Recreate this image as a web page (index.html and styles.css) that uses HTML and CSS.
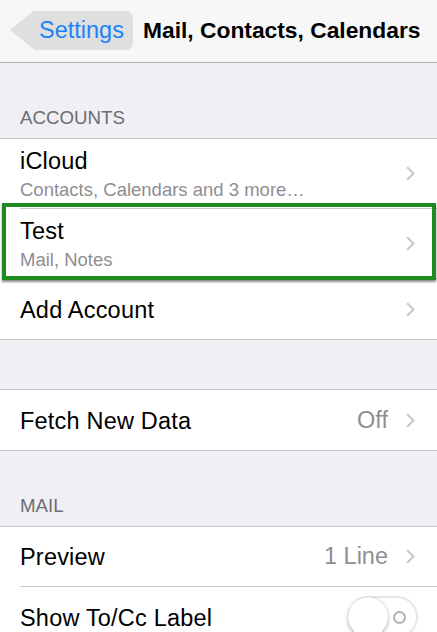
FILE: index.html
```html
<!DOCTYPE html>
<html lang="en">
<head>
  <meta charset="UTF-8" />
  <meta name="viewport" content="width=device-width, initial-scale=1.0" />
  <title>Mail, Contacts, Calendars</title>
  <link rel="stylesheet" href="styles.css">
</head>
<body>
  <div class="navbar">
    <div class="back">
      <span class="back-label">Settings</span>
    </div>
    <div class="nav-title">Mail, Contacts, Calendars</div>
  </div>

  <div class="section-header">ACCOUNTS</div>
  <div class="group">
    <div class="cell">
      <div class="cell-body tall">
        <div class="cell-text">
          <div class="title">iCloud</div>
          <div class="subtitle">Contacts, Calendars and 3 more…</div>
        </div>
        <svg class="chevron" width="9" height="15" viewBox="0 0 9 15"><polyline points="1.2,1.2 7.5,7.5 1.2,13.8" /></svg>
      </div>
    </div>
    <div class="cell highlighted">
      <div class="cell-body tall">
        <div class="cell-text">
          <div class="title">Test</div>
          <div class="subtitle">Mail, Notes</div>
        </div>
        <svg class="chevron" width="9" height="15" viewBox="0 0 9 15"><polyline points="1.2,1.2 7.5,7.5 1.2,13.8" /></svg>
      </div>
    </div>
    <div class="cell">
      <div class="cell-body">
        <div class="title">Add Account</div>
        <svg class="chevron" width="9" height="15" viewBox="0 0 9 15"><polyline points="1.2,1.2 7.5,7.5 1.2,13.8" /></svg>
      </div>
    </div>
  </div>

  <div class="spacer"></div>
  <div class="group">
    <div class="cell">
      <div class="cell-body">
        <div class="title">Fetch New Data</div>
        <div class="accessory">
          <span class="detail">Off</span>
          <svg class="chevron" width="9" height="15" viewBox="0 0 9 15"><polyline points="1.2,1.2 7.5,7.5 1.2,13.8" /></svg>
        </div>
      </div>
    </div>
  </div>

  <div class="section-header">MAIL</div>
  <div class="group">
    <div class="cell">
      <div class="cell-body">
        <div class="title">Preview</div>
        <div class="accessory">
          <span class="detail">1 Line</span>
          <svg class="chevron" width="9" height="15" viewBox="0 0 9 15"><polyline points="1.2,1.2 7.5,7.5 1.2,13.8" /></svg>
        </div>
      </div>
    </div>
    <div class="cell">
      <div class="cell-body switch-row">
        <div class="title">Show To/Cc Label</div>
        <div class="switch">
          <div class="knob"></div>
          <div class="off-mark"></div>
        </div>
      </div>
    </div>
  </div>
</body>
</html>
```

FILE: styles.css
```css
* {
  box-sizing: border-box;
}
body {
  margin: 0;
  background: #efeff4;
  font-family: 'Liberation Sans', Arial, sans-serif;
  color: #000;
  overflow: hidden;
}

.navbar {
  height: 63px;
  background: #f7f7f7;
  border-bottom: 1px solid #b2b2b2;
  display: flex;
  align-items: center;
  padding-left: 10px;
  padding-bottom: 2px;
}

.back {
  position: relative;
  height: 39px;
  width: 99px;
  margin-left: 24px;
  background: #dfdfdf;
  border-radius: 0 7px 7px 0;
  display: flex;
  align-items: center;
  padding-left: 5px;
}
.back::before {
  content: '';
  position: absolute;
  left: -24px;
  top: 0;
  width: 24px;
  height: 39px;
  background: #dfdfdf;
  clip-path: polygon(100% 0, 0 50%, 100% 100%);
}
.back-label {
  color: #1a82fb;
  font-size: 23.5px;
}

.nav-title {
  margin-left: 10px;
  font-size: 22.8px;
  font-weight: bold;
}

.section-header {
  height: 75px;
  display: flex;
  align-items: flex-end;
  padding: 0 0 9px 20px;
  color: #6d6d72;
  font-size: 18.7px;
}

.spacer {
  height: 49px;
}

.group {
  background: #fff;
  border-top: 1px solid #c8c7cc;
  border-bottom: 1px solid #c8c7cc;
}

.cell {
  padding-left: 20px;
  position: relative;
}
.cell-body {
  height: 60px;
  display: flex;
  align-items: center;
  justify-content: space-between;
  padding-right: 22px;
  border-bottom: 1px solid #c8c7cc;
}
.cell:last-child .cell-body {
  border-bottom: none;
}
.cell-body.tall {
  height: 70px;
}
.cell-text {
  padding-top: 2px;
}

.title {
  font-size: 23.5px;
  letter-spacing: 0.2px;
  padding-top: 2px;
}
.cell-text .title {
  line-height: 26px;
  padding-top: 0;
}
.subtitle {
  font-size: 18.5px;
  line-height: 22px;
  color: #8e8e93;
  margin-top: 5px;
}

.accessory {
  display: flex;
  align-items: center;
}
.detail {
  font-size: 23.5px;
  color: #8e8e93;
  margin-right: 18px;
}

.chevron {
  display: block;
  fill: none;
  stroke: #c7c7cc;
  stroke-width: 2;
}

.highlighted::after {
  content: '';
  position: absolute;
  top: -6px;
  left: 2px;
  right: 1px;
  bottom: -1px;
  border: 4px solid #1f8a1f;
  box-shadow: 0 2px 2px rgba(0, 0, 0, 0.45);
}

.switch-row {
  padding-right: 19px;
}
.switch {
  position: relative;
  width: 70px;
  height: 42px;
  border: 2px solid #e5e5ea;
  border-radius: 21px;
  display: flex;
  align-items: center;
  justify-content: space-between;
  padding-right: 10px;
}
.knob {
  width: 40px;
  height: 40px;
  margin-left: -2px;
  border-radius: 50%;
  background: #fff;
  box-shadow: 0 2px 4px rgba(0, 0, 0, 0.25), 0 0 1px rgba(0, 0, 0, 0.3);
}
.off-mark {
  width: 13px;
  height: 13px;
  border: 2px solid #b0b0b0;
  border-radius: 50%;
}
```
